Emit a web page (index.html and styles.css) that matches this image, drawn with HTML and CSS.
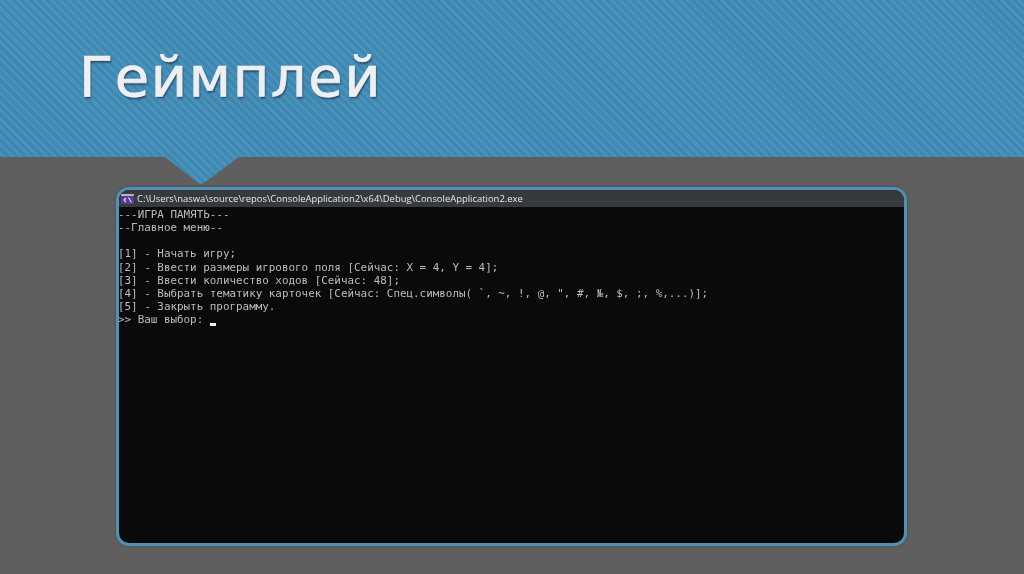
FILE: index.html
```html
<!DOCTYPE html>
<html lang="ru">
<head>
<meta charset="utf-8">
<title>Геймплей</title>
<link rel="stylesheet" href="styles.css">
</head>
<body>
<header class="banner">
  <h1 class="title">Геймплей</h1>
</header>
<main class="content">
  <section class="console">
    <div class="console-bar">
      <svg class="console-icon" width="13" height="10" viewBox="0 0 13 10"><rect width="13" height="10" rx="1" fill="#5a3a92"/><rect width="13" height="2" rx="1" fill="#b9b2cc"/><path d="M5 4 L3 6 L5 8 M7.5 3.5 L10.5 8.5" fill="none" stroke="#e6e0f2" stroke-width="1.1"/></svg>
      <span class="console-path">C:\Users\naswa\source\repos\ConsoleApplication2\x64\Debug\ConsoleApplication2.exe</span>
    </div>
    <pre class="console-body">---ИГРА ПАМЯТЬ---
--Главное меню--

[1] - Начать игру;
[2] - Ввести размеры игрового поля [Сейчас: X = 4, Y = 4];
[3] - Ввести количество ходов [Сейчас: 48];
[4] - Выбрать тематику карточек [Сейчас: Спец.символы( `, ~, !, @, ", #, №, $, ;, %,...)];
[5] - Закрыть программу.
&gt;&gt; Ваш выбор: <span class="cursor"></span></pre>
  </section>
</main>
</body>
</html>
```
FILE: styles.css
```css
* { box-sizing: border-box; }
html, body { margin: 0; height: 100%; }
body {
  width: 1024px;
  height: 574px;
  overflow: hidden;
  background: #5f5f5f;
  display: flex;
  flex-direction: column;
}
.banner {
  position: relative;
  height: 157px;
  flex: none;
  padding: 37px 0 0 79px;
}
.banner::before {
  content: "";
  position: absolute;
  inset: 0 0 -27px 0;
  background: repeating-linear-gradient(45deg, #3d88b3 0 3px, #4a91b9 3px 6px);
  clip-path: polygon(0 0, 100% 0, 100% 157px, 239px 157px, 205px 182px, 201px 184px, 197px 182px, 165px 157px, 0 157px);
}
.title {
  position: relative;
  margin: 0;
  font: 400 56px/80px "DejaVu Sans", "Open Sans", sans-serif;
  letter-spacing: 1.6px;
  -webkit-text-stroke: 0.7px #eeeff0;
  color: #eeeff0;
  text-shadow: 1px 2px 2px rgba(30, 50, 70, 0.75);
  filter: blur(0.3px);
}
.content {
  flex: 1;
  padding: 30px 117px 28px 116px;
  display: flex;
}
.console {
  flex: 1;
  display: flex;
  flex-direction: column;
  background: #0a0a0a;
  border: 3px solid #5091b6;
  border-radius: 13px;
  overflow: hidden;
  box-shadow: 0 0 3px rgba(60, 60, 60, 0.6);
}
.console-bar {
  height: 17px;
  flex: none;
  background: #373a3c;
  display: flex;
  align-items: center;
  gap: 3px;
  padding-left: 2px;
}
.console-icon { flex: none; }
.console-path {
  font: 400 9.44px/17px "Open Sans", "Noto Sans", sans-serif;
  color: #e8e8e8;
  white-space: nowrap;
  filter: blur(0.25px);
}
.console-body {
  margin: 0 0 0 -1px;
  padding: 1px 0 0 0;
  font: 400 10.9px/13.15px "DejaVu Sans Mono", "Liberation Mono", monospace;
  color: #bcbcbc;
  filter: blur(0.3px);
}
.cursor {
  display: inline-block;
  width: 6px;
  height: 3px;
  background: #f2f2f2;
  vertical-align: -3px;
}
```
